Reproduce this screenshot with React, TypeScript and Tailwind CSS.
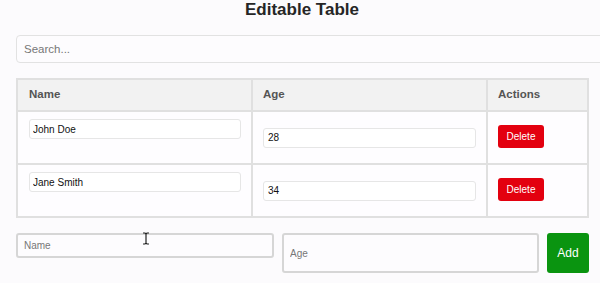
import { useState } from 'react'

type Row = { id: number; name: string; age: string }

export default function App() {
  const [rows, setRows] = useState<Row[]>([
    { id: 1, name: 'John Doe', age: '28' },
    { id: 2, name: 'Jane Smith', age: '34' },
  ])
  const [search, setSearch] = useState('')
  const [newName, setNewName] = useState('')
  const [newAge, setNewAge] = useState('')

  const update = (id: number, key: 'name' | 'age', value: string) =>
    setRows((rs) => rs.map((r) => (r.id === id ? { ...r, [key]: value } : r)))

  const visible = rows.filter((r) => r.name.toLowerCase().includes(search.toLowerCase()))

  return (
    <div className="relative min-h-screen overflow-hidden bg-[#fcfbfd] px-4 font-['Liberation_Sans',Arial,sans-serif]">
      <h1 className="h-[20px] pl-[4px] text-center text-[17px] font-bold leading-[20px] text-[#262626]">Editable Table</h1>

      <input
        value={search}
        onChange={(e) => setSearch(e.target.value)}
        placeholder="Search..."
        className="mt-[15px] block h-[28px] w-[640px] rounded-[4px] border border-[#e2e2e2] bg-[#fdfcfe] px-[7px] text-[11.5px] text-[#333] outline-none placeholder:text-[#777]"
      />

      <table className="mt-[15px] w-[573px] table-fixed border-collapse border-2 border-[#e0e0e0]">
        <thead>
          <tr className="h-[32px] bg-[#f2f2f2]">
            <th className="w-[235px] border-2 border-[#e0e0e0] px-[11px] text-left text-[11.5px] font-bold text-[#555]">Name</th>
            <th className="w-[235px] border-2 border-[#e0e0e0] px-[10px] text-left text-[11.5px] font-bold text-[#555]">Age</th>
            <th className="border-2 border-[#e0e0e0] px-[10px] text-left text-[11.5px] font-bold text-[#555]">Actions</th>
          </tr>
        </thead>
        <tbody>
          {visible.map((r) => (
            <tr key={r.id} className="h-[53px] bg-[#fefdff]">
              <td className="border-2 border-[#e0e0e0] px-[11px] pt-[7px] align-top">
                <input
                  value={r.name}
                  onChange={(e) => update(r.id, 'name', e.target.value)}
                  className="block h-[20px] w-[212px] rounded-[3px] border border-[#e6e6e6] bg-white px-[3px] text-[10px] text-[#111] outline-none"
                />
              </td>
              <td className="border-2 border-[#e0e0e0] px-[10px] align-middle">
                <input
                  value={r.age}
                  onChange={(e) => update(r.id, 'age', e.target.value)}
                  className="block h-[20px] w-[213px] rounded-[3px] border border-[#e6e6e6] bg-white px-[4px] text-[10px] text-[#111] outline-none"
                />
              </td>
              <td className="border-2 border-[#e0e0e0] px-[10px] pb-[2px] align-middle">
                <button
                  onClick={() => setRows((rs) => rs.filter((x) => x.id !== r.id))}
                  className="block h-[23px] w-[46px] rounded-[3px] bg-[#e3000f] text-[10px] text-white"
                >
                  Delete
                </button>
              </td>
            </tr>
          ))}
        </tbody>
      </table>

      <div className="mt-[15px] flex items-start gap-2">
        <input
          value={newName}
          onChange={(e) => setNewName(e.target.value)}
          placeholder="Name"
          className="h-[25px] w-[258px] shrink-0 rounded-[3px] border-2 border-[#d6d6d6] bg-[#fdfcfe] px-[6px] text-[10px] outline-none placeholder:text-[#777]"
        />
        <input
          value={newAge}
          onChange={(e) => setNewAge(e.target.value)}
          placeholder="Age"
          className="h-[40px] w-[257px] shrink-0 rounded-[3px] border-2 border-[#d6d6d6] bg-[#fdfcfe] px-[6px] text-[10px] outline-none placeholder:text-[#777]"
        />
        <button
          onClick={() => {
            if (!newName) return
            setRows((rs) => [...rs, { id: Date.now(), name: newName, age: newAge }])
            setNewName('')
            setNewAge('')
          }}
          className="h-[40px] w-[42px] shrink-0 rounded-[3px] bg-[#0a9410] text-[12px] text-white"
        >
          Add
        </button>
      </div>

      {/* mouse text cursor */}
      <svg className="pointer-events-none absolute left-[142px] top-[232px]" width="8" height="13" viewBox="0 0 8 13" fill="none">
        <path d="M1 1h2l1 1 1-1h2M4 2v9M1 12h2l1-1 1 1h2" stroke="#222" strokeWidth="1.2" />
      </svg>
    </div>
  )
}
